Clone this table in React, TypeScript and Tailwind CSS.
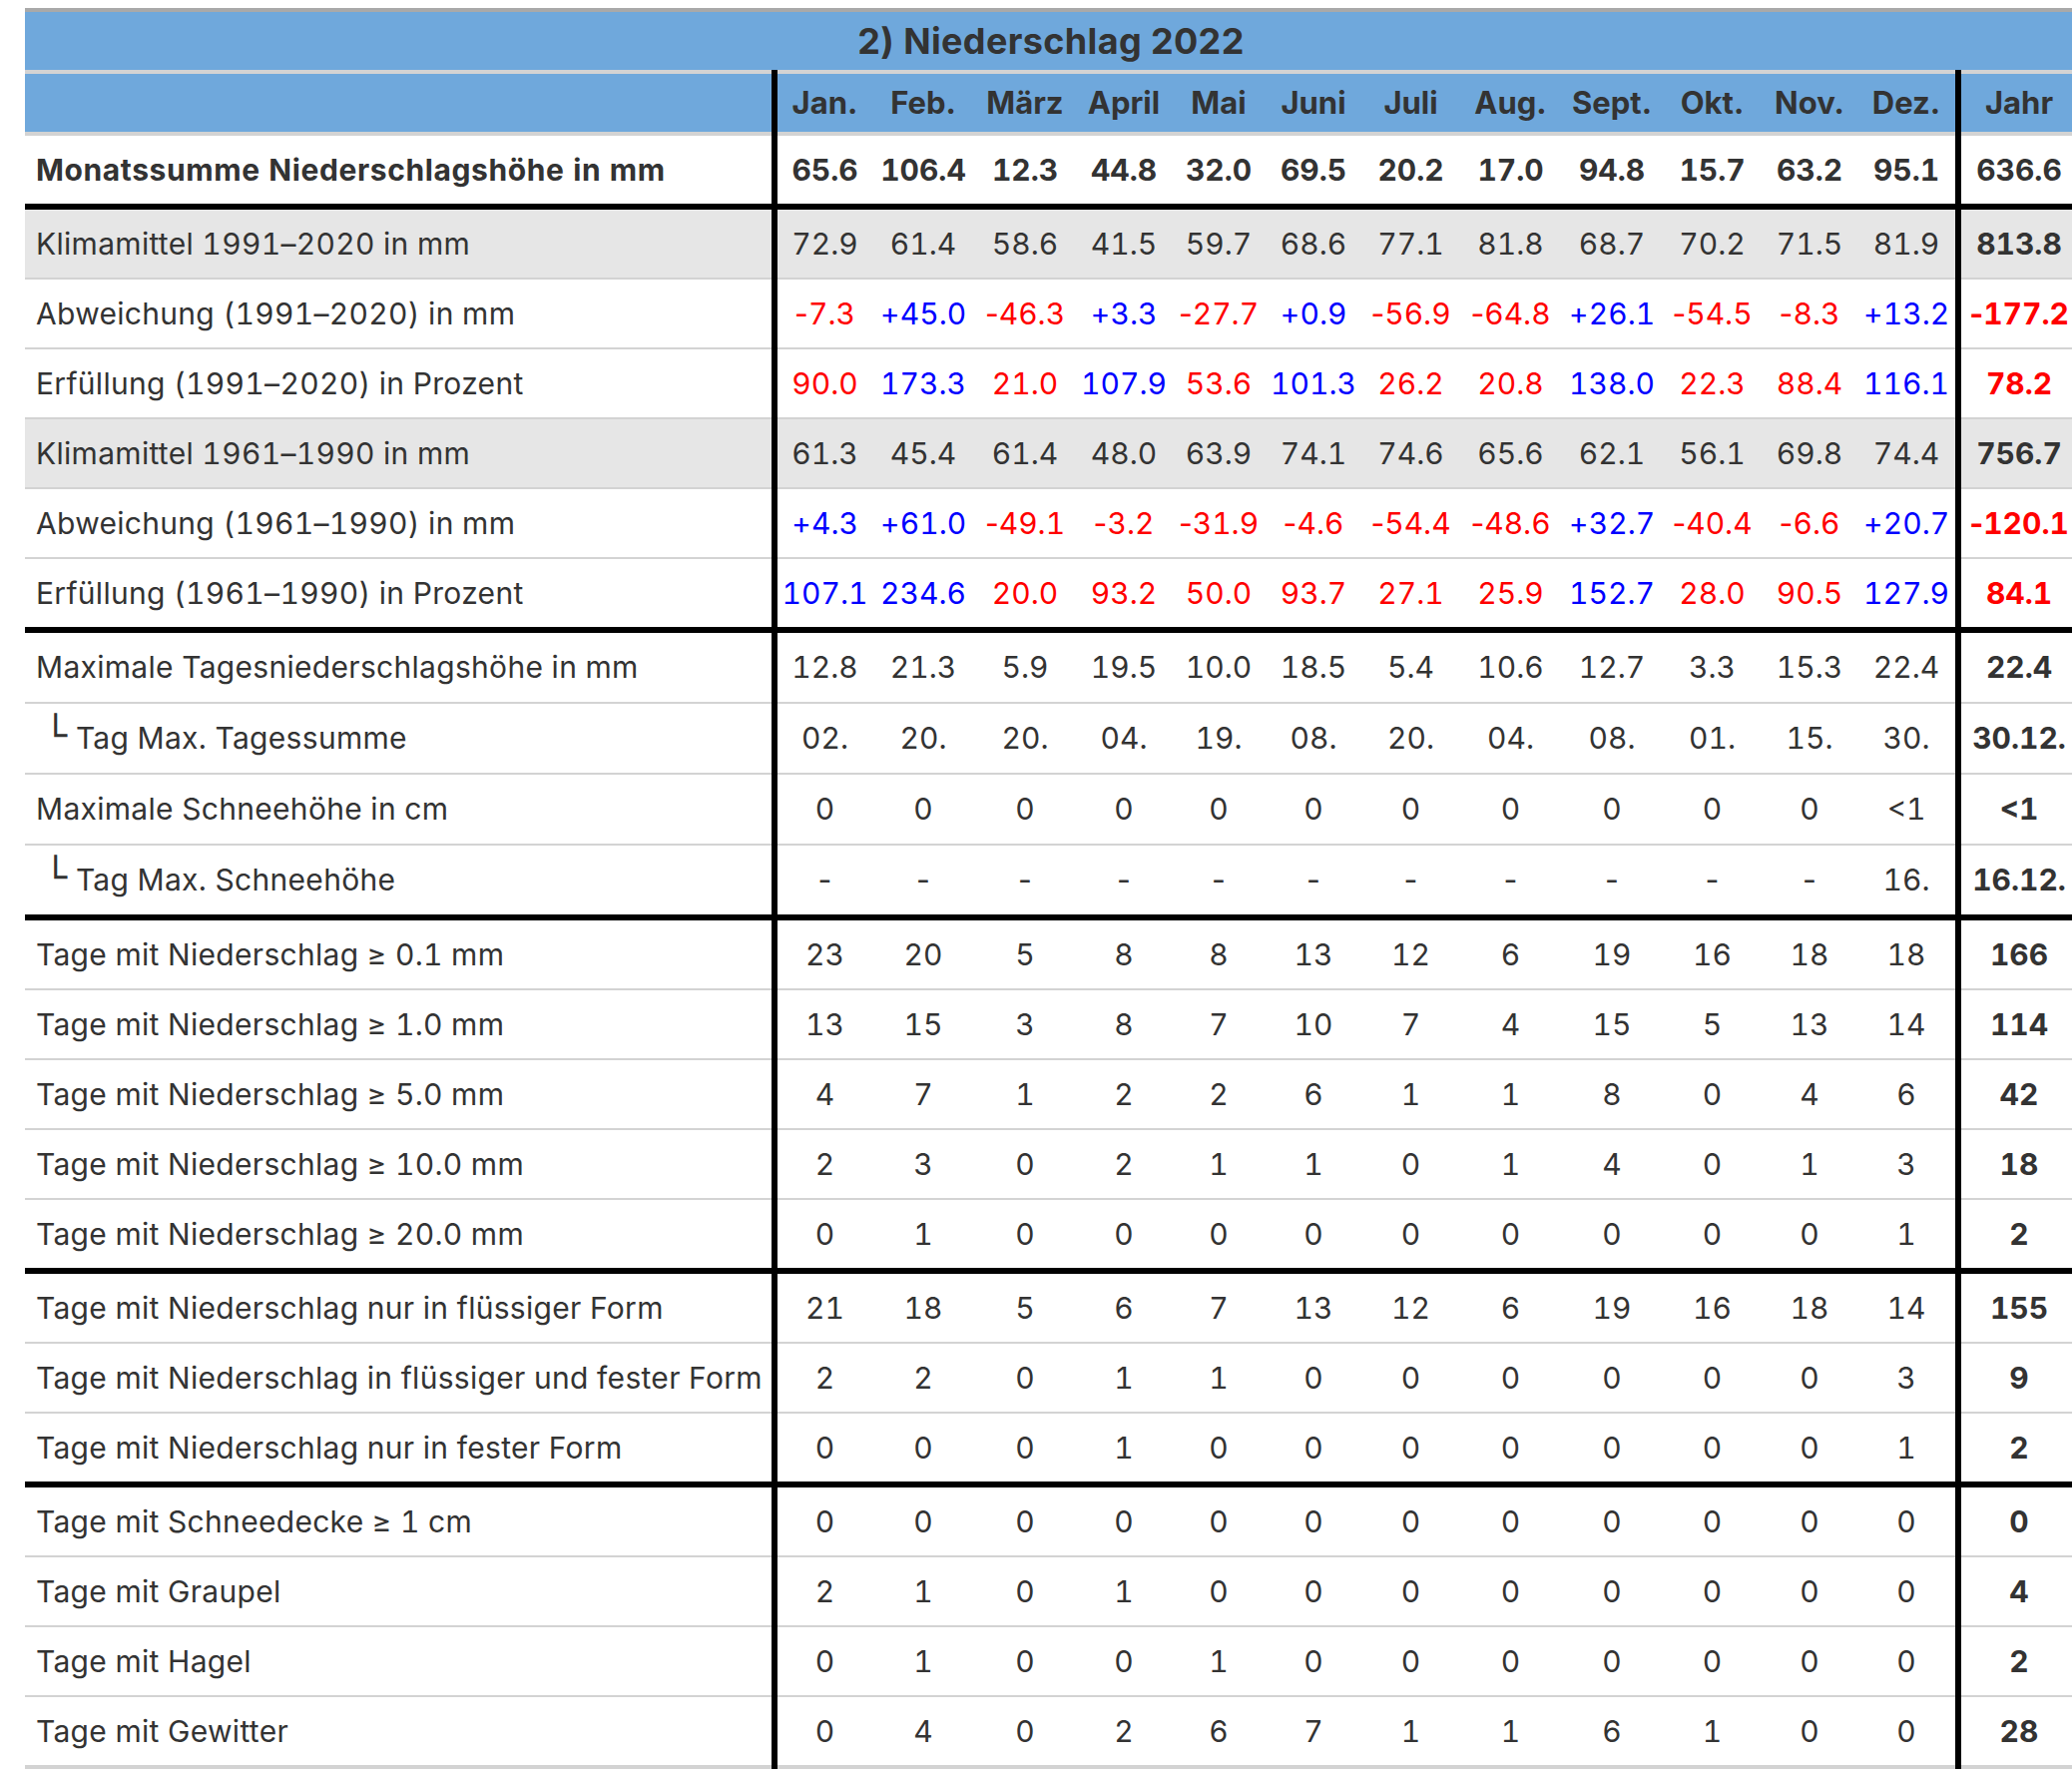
import React from "react";

type Row = {
  label: string;
  sub?: boolean;
  values: string[];
  year: string;
  kind?: "sign" | "percent";
  gray?: boolean;
  thick?: boolean;
  tall?: boolean;
};

const MONTHS = ["Jan.", "Feb.", "März", "April", "Mai", "Juni", "Juli", "Aug.", "Sept.", "Okt.", "Nov.", "Dez."];
const COL_WIDTHS = [98, 102, 102, 96, 94, 96, 99, 101, 102, 99, 96, 101];

const SUM = ["65.6", "106.4", "12.3", "44.8", "32.0", "69.5", "20.2", "17.0", "94.8", "15.7", "63.2", "95.1"];

const ROWS: Row[] = [
  { label: "Klimamittel 1991–2020 in mm", gray: true, values: ["72.9", "61.4", "58.6", "41.5", "59.7", "68.6", "77.1", "81.8", "68.7", "70.2", "71.5", "81.9"], year: "813.8" },
  { label: "Abweichung (1991–2020) in mm", kind: "sign", values: ["-7.3", "+45.0", "-46.3", "+3.3", "-27.7", "+0.9", "-56.9", "-64.8", "+26.1", "-54.5", "-8.3", "+13.2"], year: "-177.2" },
  { label: "Erfüllung (1991–2020) in Prozent", kind: "percent", values: ["90.0", "173.3", "21.0", "107.9", "53.6", "101.3", "26.2", "20.8", "138.0", "22.3", "88.4", "116.1"], year: "78.2" },
  { label: "Klimamittel 1961–1990 in mm", gray: true, values: ["61.3", "45.4", "61.4", "48.0", "63.9", "74.1", "74.6", "65.6", "62.1", "56.1", "69.8", "74.4"], year: "756.7" },
  { label: "Abweichung (1961–1990) in mm", kind: "sign", values: ["+4.3", "+61.0", "-49.1", "-3.2", "-31.9", "-4.6", "-54.4", "-48.6", "+32.7", "-40.4", "-6.6", "+20.7"], year: "-120.1" },
  { label: "Erfüllung (1961–1990) in Prozent", kind: "percent", thick: true, values: ["107.1", "234.6", "20.0", "93.2", "50.0", "93.7", "27.1", "25.9", "152.7", "28.0", "90.5", "127.9"], year: "84.1" },
  { label: "Maximale Tagesniederschlagshöhe in mm", tall: true, values: ["12.8", "21.3", "5.9", "19.5", "10.0", "18.5", "5.4", "10.6", "12.7", "3.3", "15.3", "22.4"], year: "22.4" },
  { label: "Tag Max. Tagessumme", sub: true, tall: true, values: ["02.", "20.", "20.", "04.", "19.", "08.", "20.", "04.", "08.", "01.", "15.", "30."], year: "30.12." },
  { label: "Maximale Schneehöhe in cm", tall: true, values: ["0", "0", "0", "0", "0", "0", "0", "0", "0", "0", "0", "<1"], year: "<1" },
  { label: "Tag Max. Schneehöhe", sub: true, tall: true, thick: true, values: ["-", "-", "-", "-", "-", "-", "-", "-", "-", "-", "-", "16."], year: "16.12." },
  { label: "Tage mit Niederschlag ≥ 0.1 mm", values: ["23", "20", "5", "8", "8", "13", "12", "6", "19", "16", "18", "18"], year: "166" },
  { label: "Tage mit Niederschlag ≥ 1.0 mm", values: ["13", "15", "3", "8", "7", "10", "7", "4", "15", "5", "13", "14"], year: "114" },
  { label: "Tage mit Niederschlag ≥ 5.0 mm", values: ["4", "7", "1", "2", "2", "6", "1", "1", "8", "0", "4", "6"], year: "42" },
  { label: "Tage mit Niederschlag ≥ 10.0 mm", values: ["2", "3", "0", "2", "1", "1", "0", "1", "4", "0", "1", "3"], year: "18" },
  { label: "Tage mit Niederschlag ≥ 20.0 mm", thick: true, values: ["0", "1", "0", "0", "0", "0", "0", "0", "0", "0", "0", "1"], year: "2" },
  { label: "Tage mit Niederschlag nur in flüssiger Form", values: ["21", "18", "5", "6", "7", "13", "12", "6", "19", "16", "18", "14"], year: "155" },
  { label: "Tage mit Niederschlag in flüssiger und fester Form", values: ["2", "2", "0", "1", "1", "0", "0", "0", "0", "0", "0", "3"], year: "9" },
  { label: "Tage mit Niederschlag nur in fester Form", thick: true, values: ["0", "0", "0", "1", "0", "0", "0", "0", "0", "0", "0", "1"], year: "2" },
  { label: "Tage mit Schneedecke ≥ 1 cm", values: ["0", "0", "0", "0", "0", "0", "0", "0", "0", "0", "0", "0"], year: "0" },
  { label: "Tage mit Graupel", values: ["2", "1", "0", "1", "0", "0", "0", "0", "0", "0", "0", "0"], year: "4" },
  { label: "Tage mit Hagel", values: ["0", "1", "0", "0", "1", "0", "0", "0", "0", "0", "0", "0"], year: "2" },
  { label: "Tage mit Gewitter", values: ["0", "4", "0", "2", "6", "7", "1", "1", "6", "1", "0", "0"], year: "28" },
];

// rot = zu trocken, blau = zu nass
function valueColor(kind: Row["kind"], v: string) {
  if (kind === "sign") return v.startsWith("+") ? "text-[#0000ff]" : "text-[#ff0000]";
  if (kind === "percent") return parseFloat(v) >= 100 ? "text-[#0000ff]" : "text-[#ff0000]";
  return "text-[#333333]";
}

// Vorzeichen ohne tabular-Breite, sonst steht es zu weit weg
function Num({ v }: { v: string }) {
  if (v.length > 1 && (v[0] === "+" || v[0] === "-")) {
    return (
      <>
        <span className="normal-nums">{v[0]}</span>
        {v.slice(1)}
      </>
    );
  }
  return <>{v}</>;
}

export default function App() {
  return (
    <div className="min-h-screen overflow-hidden bg-white pt-2 pl-[25px] font-['Inter',sans-serif] text-[30px] text-[#333333]">
      <table className="w-[2056px] table-fixed border-collapse">
        <colgroup>
          <col className="w-[751px]" />
          {COL_WIDTHS.map((w, i) => (
            <col key={i} style={{ width: w }} />
          ))}
          <col className="w-[119px]" />
        </colgroup>
        <thead>
          <tr>
            <th
              colSpan={14}
              className="border-t-4 border-[#a9a9a9] bg-[#6fa8dc] p-0 text-center text-[36px] leading-[58px] font-bold tracking-[0.01em]"
            >
              2) Niederschlag 2022
            </th>
          </tr>
          <tr className="bg-[#6fa8dc] text-[31px] font-bold">
            <th className="border-y-4 border-[#d3d3d3] p-0 leading-[58px]" />
            {MONTHS.map((m, i) => (
              <th
                key={m}
                className={`border-y-4 border-[#d3d3d3] p-0 text-center leading-[58px] ${
                  i === 0 ? "border-l-[6px] border-l-black" : ""
                }`}
              >
                {m}
              </th>
            ))}
            <th className="border-y-4 border-l-[6px] border-[#d3d3d3] border-l-black p-0 text-center leading-[58px]">
              Jahr
            </th>
          </tr>
        </thead>
        <tbody className="tabular-nums">
          <tr className="font-bold">
            <td className="border-b-[6px] border-black p-0 pl-[11px] leading-[68px] tracking-[0.02em] whitespace-nowrap">
              Monatssumme Niederschlagshöhe in mm
            </td>
            {SUM.map((v, i) => (
              <td
                key={i}
                className={`border-b-[6px] border-black p-0 text-center leading-[68px] ${
                  i === 0 ? "border-l-[6px]" : ""
                }`}
              >
                {v}
              </td>
            ))}
            <td className="border-b-[6px] border-l-[6px] border-black p-0 text-center leading-[68px]">636.6</td>
          </tr>
          {ROWS.map((row, idx) => {
            const last = idx === ROWS.length - 1;
            const bottom = row.thick
              ? "border-b-[6px] border-b-black"
              : last
              ? "border-b-4 border-b-[#d3d3d3]"
              : "border-b-2 border-b-[#d3d3d3]";
            const lead = row.tall ? "leading-[69px]" : "leading-[68px]";
            return (
              <tr key={row.label} className={row.gray ? "bg-[#e6e6e6]" : "bg-white"}>
                <td className={`${bottom} ${lead} p-0 pl-[11px] tracking-[0.01em] whitespace-nowrap`}>
                  {row.sub && (
                    <>
                      {"\u00a0"}
                      <span className="font-['DejaVu_Sans',sans-serif] text-[38px] leading-none">└</span>{" "}
                    </>
                  )}
                  {row.label}
                </td>
                {row.values.map((v, i) => (
                  <td
                    key={i}
                    className={`${bottom} ${lead} p-0 text-center ${valueColor(row.kind, v)} ${
                      i === 0 ? "border-l-[6px] border-l-black" : ""
                    }`}
                  >
                    <Num v={v} />
                  </td>
                ))}
                <td
                  className={`${bottom} ${lead} border-l-[6px] border-l-black p-0 text-center font-bold ${valueColor(
                    row.kind,
                    row.year
                  )}`}
                >
                  <Num v={row.year} />
                </td>
              </tr>
            );
          })}
        </tbody>
      </table>
    </div>
  );
}
